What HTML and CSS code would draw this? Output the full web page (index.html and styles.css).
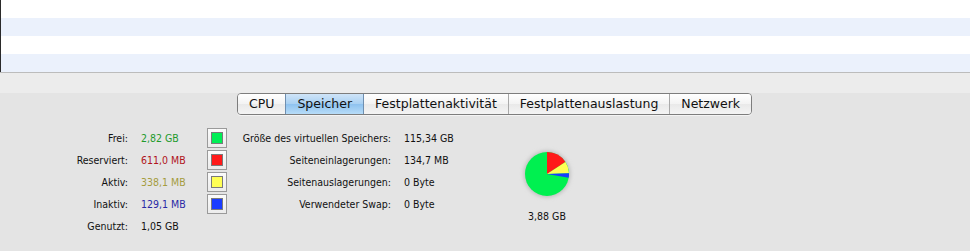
FILE: index.html
```html
<!DOCTYPE html>
<html lang="de">
<head>
  <meta charset="UTF-8">
  <title>Aktivitätsanzeige – Speicher</title>
  <link rel="stylesheet" href="styles.css">
</head>
<body>
  <div class="window">
    <!-- process list (empty rows) -->
    <div class="list">
      <div class="row"></div>
      <div class="row alt"></div>
      <div class="row"></div>
      <div class="row alt"></div>
    </div>

    <div class="toolbar"></div>

    <div class="pane">
      <div class="tabs">
        <span class="tab">CPU</span>
        <span class="tab selected">Speicher</span>
        <span class="tab">Festplattenaktivität</span>
        <span class="tab">Festplattenauslastung</span>
        <span class="tab">Netzwerk</span>
      </div>

      <div class="stats">
        <div class="mem">
          <span class="label">Frei:</span>
          <span class="value c-free">2,82 GB</span>
          <span class="swatch"><i class="sw-green"></i></span>

          <span class="label">Reserviert:</span>
          <span class="value c-wired">611,0 MB</span>
          <span class="swatch"><i class="sw-red"></i></span>

          <span class="label">Aktiv:</span>
          <span class="value c-active">338,1 MB</span>
          <span class="swatch"><i class="sw-yellow"></i></span>

          <span class="label">Inaktiv:</span>
          <span class="value c-inactive">129,1 MB</span>
          <span class="swatch"><i class="sw-blue"></i></span>

          <span class="label">Genutzt:</span>
          <span class="value">1,05 GB</span>
          <span></span>
        </div>

        <div class="vm">
          <span class="label">Größe des virtuellen Speichers:</span>
          <span class="value">115,34 GB</span>

          <span class="label">Seiteneinlagerungen:</span>
          <span class="value">134,7 MB</span>

          <span class="label">Seitenauslagerungen:</span>
          <span class="value">0 Byte</span>

          <span class="label">Verwendeter Swap:</span>
          <span class="value">0 Byte</span>
        </div>

        <div class="chart">
          <svg class="pie" width="56" height="56" viewBox="-28 -28 56 56">
            <defs>
              <filter id="soft" x="-50%" y="-50%" width="200%" height="200%">
                <feGaussianBlur stdDeviation="2"/>
              </filter>
            </defs>
            <circle r="23" fill="#b8b8b8" filter="url(#soft)"/>
            <circle r="22" fill="#00f050"/>
            <!-- red 0..57deg, yellow 57..88deg, blue 88..100deg -->
            <path d="M0 0 L0 -22 A22 22 0 0 1 18.45 -11.98 Z" fill="#ff1a1a"/>
            <path d="M0 0 L18.45 -11.98 A22 22 0 0 1 21.99 -0.77 Z" fill="#ffff55"/>
            <path d="M0 0 L21.99 -0.77 A22 22 0 0 1 21.67 3.82 Z" fill="#1a3cff"/>
          </svg>
          <div class="total">3,88 GB</div>
        </div>
      </div>
    </div>
  </div>
</body>
</html>
```

FILE: styles.css
```css
body {
    margin: 0;
    background-color: #e4e4e4;
    font-family: "Lucida Grande", "DejaVu Sans", sans-serif;
    color: #111;
  }

  .window {
    width: 970px;
    height: 251px;
    overflow: hidden;
  }

  .list {
    border-left: 1px solid #2a2a2a;
    height: 72px;
    background-color: #fff;
  }

  .row {
    height: 18px;
  }

  .row.alt {
    background-color: #ebf1fc;
  }

  .toolbar {
    height: 30px;
    background-color: #ececec;
    border-top: 1px solid #bcbcbc;
    border-bottom: 1px solid #a8a8a8;
  }

  .pane {
    background-color: #e4e4e4;
    height: 147px;
  }

  .tabs {
    display: flex;
    width: max-content;
    margin: -11px 0 0 237px;
    border: 1px solid #7d7d7d;
    border-radius: 4px;
    overflow: hidden;
    box-shadow: 0 1px 0 rgba(255, 255, 255, 0.6);
  }

  .tab {
    font-size: 12.5px;
    height: 20px;
    line-height: 20px;
    padding: 0 11px;
    color: #111;
    background: linear-gradient(#ffffff, #f3f3f3 50%, #e9e9e9 51%, #f4f4f4);
    border-left: 1px solid #a9a9a9;
  }

  .tab:first-child {
    border-left: none;
  }

  .tab.selected {
    background: linear-gradient(#cfe4f8, #a8d0f2 50%, #8ec2ef 51%, #b7dcf8);
    border-left-color: #6f8fb0;
  }

  .tab.selected + .tab {
    border-left-color: #6f8fb0;
  }

  .stats {
    display: flex;
    font-family: "DejaVu Sans Condensed", "DejaVu Sans", sans-serif;
    font-stretch: condensed;
    font-size: 10.5px;
    margin-top: 12px;
  }

  .mem {
    display: grid;
    grid-template-columns: 128px 53px 20px;
    grid-auto-rows: 22px;
    column-gap: 13px;
    align-items: center;
  }

  .vm {
    display: grid;
    grid-template-columns: 149px 80px;
    grid-auto-rows: 22px;
    column-gap: 13px;
    align-items: center;
    margin-left: 15px;
  }

  .label {
    text-align: right;
    white-space: nowrap;
  }

  .value {
    white-space: nowrap;
  }

  .c-free { color: #1e9a2c; }
  .c-wired { color: #b0141c; }
  .c-active { color: #a59c3e; }
  .c-inactive { color: #2a2aa6; }

  .swatch {
    width: 18px;
    height: 18px;
    border: 1px solid #9a9a9a;
    background: linear-gradient(#fbfbfb, #ececec);
    display: flex;
    align-items: center;
    justify-content: center;
  }

  .swatch i {
    width: 10px;
    height: 10px;
    border: 1px solid #7a7a7a;
  }

  .sw-green { background-color: #00ee55; }
  .sw-red { background-color: #ff1a1a; }
  .sw-yellow { background-color: #ffff55; }
  .sw-blue { background-color: #1a3cff; }

  .chart {
    margin-left: 35px;
    margin-top: 19px;
    width: 56px;
    text-align: center;
  }

  .pie {
    display: block;
  }

  .total {
    margin-top: 8px;
    white-space: nowrap;
    margin-left: -10px;
    margin-right: -10px;
  }
```
